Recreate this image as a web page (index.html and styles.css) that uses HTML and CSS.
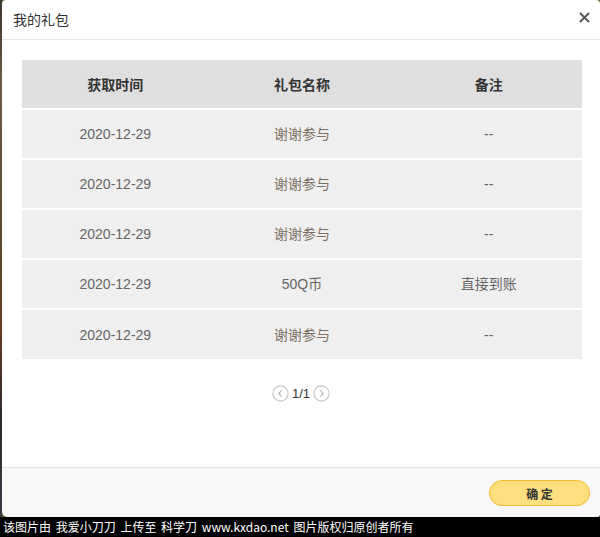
FILE: index.html
```html
<!DOCTYPE html>
<html>
<head>
<meta charset="utf-8">
<link rel="stylesheet" href="styles.css">
</head>
<body>
<div class="stage">
  <div class="dialog">
    <div class="dlg-head">
      <span class="dlg-title">我的礼包</span>
      <span class="dlg-close">
        <svg width="11" height="11" viewBox="0 0 11 11"><path d="M1 1L10 10M10 1L1 10" stroke="#555" stroke-width="1.8" fill="none"/></svg>
      </span>
    </div>
    <div class="dlg-body">
      <div class="gift-table">
        <div class="row head"><div>获取时间</div><div>礼包名称</div><div>备注</div></div>
        <div class="row"><div>2020-12-29</div><div class="name">谢谢参与</div><div>--</div></div>
        <div class="row"><div>2020-12-29</div><div class="name">谢谢参与</div><div>--</div></div>
        <div class="row"><div>2020-12-29</div><div class="name">谢谢参与</div><div>--</div></div>
        <div class="row"><div>2020-12-29</div><div>50Q币</div><div>直接到账</div></div>
        <div class="row last"><div>2020-12-29</div><div class="name">谢谢参与</div><div>--</div></div>
      </div>
      <div class="pager">
        <span class="pg-btn"><svg width="17" height="17" viewBox="0 0 17 17"><circle cx="8.5" cy="8.5" r="7.6" stroke="#c4c4c4" stroke-width="1.1" fill="none"/><path d="M9.6 5.3L6.8 8.5L9.6 11.7" stroke="#b5b5b5" stroke-width="1.2" fill="none"/></svg></span>
        <span class="pg-num">1/1</span>
        <span class="pg-btn"><svg width="17" height="17" viewBox="0 0 17 17"><circle cx="8.5" cy="8.5" r="7.6" stroke="#c4c4c4" stroke-width="1.1" fill="none"/><path d="M7.4 5.3L10.2 8.5L7.4 11.7" stroke="#b5b5b5" stroke-width="1.2" fill="none"/></svg></span>
      </div>
    </div>
    <div class="dlg-foot">
      <button class="btn-ok">确 定</button>
    </div>
  </div>
</div>
<div class="watermark">该图片由 我爱小刀刀 上传至 科学刀 www.kxdao.net 图片版权归原创者所有</div>
</body>
</html>
```
FILE: styles.css
```css
html, body {
  margin: 0;
  padding: 0;
}
body {
  width: 600px;
  height: 537px;
  overflow: hidden;
  font-family: "Liberation Sans", Arial, "Noto Sans CJK SC", sans-serif;
  background: #000;
}
.stage {
  height: 517px;
  padding-left: 2px;
  background: linear-gradient(to bottom, #3a3431 0px, #6b5a40 80px, #5a4a2a 240px, #6a3a20 330px, #2a2a30 420px, #4a4a55 600px, #6a6a70 740px, #8a3a1a 800px, #7a5a50 1000px, #5a6a30 1100px);
  background-size: 2px 517px;
  background-repeat: no-repeat;
  background-color: #5a6a30;
}
.dialog {
  width: 598px;
  height: 517px;
  background: #fff;
  border-radius: 4px 4px 4px 6px;
  display: flex;
  flex-direction: column;
  overflow: hidden;
}
.dlg-head {
  height: 39px;
  border-bottom: 1px solid #e8e8e8;
  display: flex;
  align-items: center;
  justify-content: space-between;
  padding: 0 10px 0 11px;
}
.dlg-title {
  font-family: "Noto Sans CJK SC", sans-serif;
  font-size: 14px;
  color: #333;
  margin-top: -2px;
}
.dlg-close {
  display: flex;
  margin-top: -4px;
}
.dlg-body {
  flex: 1;
  padding: 20px 18px 0 20px;
}
.gift-table {
  display: grid;
  row-gap: 2px;
}
.row {
  display: grid;
  grid-template-columns: 1fr 1fr 1fr;
  height: 48px;
  background: #efefef;
  align-items: center;
  text-align: center;
  font-size: 14px;
  color: #666;
}
.row.last {
  height: 49px;
}
.row > div {
  font-family: "Liberation Sans", Arial, "Noto Sans CJK SC", sans-serif;
  line-height: 16px;
}
.row .name {
  font-family: "Noto Sans CJK SC", sans-serif;
  color: #7d6f62;
  margin-top: -2px;
}
.row.head {
  background: #dfdfdf;
  font-weight: bold;
  font-size: 14px;
  color: #333;
}
.row.head > div {
  font-family: "Noto Sans CJK SC", sans-serif;
  margin-top: -1px;
}
.pager {
  display: flex;
  justify-content: center;
  align-items: center;
  gap: 3px;
  margin-top: 26px;
  padding-right: 2px;
}
.pg-btn {
  display: flex;
}
.pg-num {
  font-size: 13px;
  color: #333;
}
.dlg-foot {
  height: 50px;
  border-top: 1px solid #e4e4e4;
  background: #f8f8f8;
  display: flex;
  justify-content: flex-end;
  align-items: flex-start;
  padding: 12px 10px 0 0;
  box-sizing: border-box;
}
.btn-ok {
  width: 101px;
  height: 26px;
  border-radius: 13px;
  border: 1px solid #f2bb2c;
  background: #fddf7e;
  font-family: "Noto Sans CJK SC", sans-serif;
  font-weight: bold;
  font-size: 12px;
  color: #333;
  padding: 0;
  cursor: pointer;
}
.watermark {
  height: 20px;
  background: #000;
  color: #fff;
  font-family: "Noto Sans CJK SC", sans-serif;
  font-size: 12px;
  line-height: 20px;
  padding-left: 3px;
  white-space: nowrap;
  word-spacing: 2px;
}
```
